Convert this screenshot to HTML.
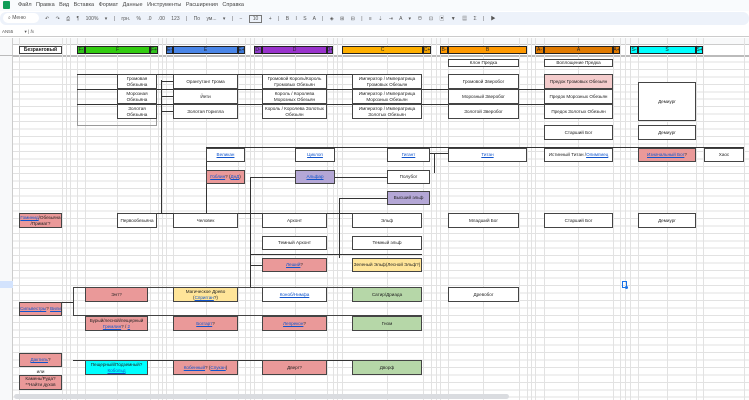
<!DOCTYPE html>
<html><head><meta charset="utf-8"><style>
*{margin:0;padding:0;box-sizing:border-box}
body{width:749px;height:400px;overflow:hidden;background:#fff;font-family:"Liberation Sans","Noto Sans CJK SC",sans-serif;position:relative;color:#222}
.a{position:absolute}
.b{position:absolute;border:1px solid #444;background:#fff;font-size:4.6px;display:flex;align-items:center;justify-content:center;text-align:center;line-height:1.2;overflow:hidden}
.p{background:#ea9999}.pl{background:#f4cccc}.v{background:#b4a7d6}.y{background:#ffe599}.g{background:#b6d7a8}.c{background:#00ffff}
u{color:#1155cc}
.h{position:absolute;background:#333;height:1px}
.vl{position:absolute;background:#333;width:1px}
.grid{position:absolute;left:0;top:55px;width:749px;height:345px;background-image:repeating-linear-gradient(to bottom,transparent 0,transparent 6.45px,#e2e2e2 6.45px,#e2e2e2 7.45px)}
.cl{position:absolute;top:38px;height:362px;width:1px;background:#e2e2e2}
.bar{position:absolute;top:46px;height:8px;font-size:5px;display:flex;align-items:center;justify-content:center;border:1px solid #222}
</style></head><body>
<div class="a" style="left:0;top:0;width:749px;height:11px;background:#f9fbfd"></div>
<div class="a" style="left:3px;top:1px;width:7px;height:8px;background:#0f9d58;border-radius:1px"></div>
<div class="a" style="left:18px;top:2px;font-size:5.5px;color:#444;word-spacing:3px">Файл Правка Вид Вставка Формат Данные Инструменты Расширения Справка</div>
<div class="a" style="left:0;top:12px;width:749px;height:13px;background:#edf2fa;border-radius:6px"></div>
<div class="a" style="left:3px;top:13px;width:36px;height:10px;background:#fff;border-radius:5px;font-size:5px;color:#555;padding:2px 0 0 5px">⌕ Меню</div>
<div class="a" style="left:45px;top:15px;font-size:5px;color:#555;word-spacing:5px">↶ ↷ ⎙ ¶ 100% ▾ | грн. % .0 .00 123 | По ум... ▾ | − <span style="border:1px solid #777;padding:0 3px">10</span> + | B I S A | ◈ ⊞ ⊟ | ≡ ⇣ ⇥ A ▾ ⊖ ⊡ ▣ ▼ ▦ Σ | ▶</div>
<div class="a" style="left:2px;top:29px;font-size:4.5px;color:#555">AN55 &nbsp;&nbsp;&nbsp;&nbsp;&nbsp;&nbsp;&nbsp;&nbsp;▾ | <i>fx</i></div>
<div class="a" style="left:0;top:36px;width:749px;height:1px;background:#ccc"></div>
<div class="a" style="left:0;top:38px;width:749px;height:7px;background:#f8f9fa;border-bottom:1px solid #ccc"></div>
<div class="a" style="left:0;top:38px;width:13px;height:362px;background:#f8f9fa;border-right:1px solid #ccc"></div>
<div class="a" style="left:0;top:55px;width:749px;height:2px;background:#bbb"></div>
<div class="grid"></div>
<div class="cl" style="left:19px"></div><div class="cl" style="left:62px"></div><div class="cl" style="left:66px"></div><div class="cl" style="left:70px"></div><div class="cl" style="left:77px"></div><div class="cl" style="left:85px"></div><div class="cl" style="left:117px"></div><div class="cl" style="left:150px"></div><div class="cl" style="left:158px"></div><div class="cl" style="left:162px"></div><div class="cl" style="left:166px"></div><div class="cl" style="left:173px"></div><div class="cl" style="left:206px"></div><div class="cl" style="left:238px"></div><div class="cl" style="left:245px"></div><div class="cl" style="left:250px"></div><div class="cl" style="left:254px"></div><div class="cl" style="left:262px"></div><div class="cl" style="left:295px"></div><div class="cl" style="left:327px"></div><div class="cl" style="left:333px"></div><div class="cl" style="left:337px"></div><div class="cl" style="left:342px"></div><div class="cl" style="left:387px"></div><div class="cl" style="left:423px"></div><div class="cl" style="left:431px"></div><div class="cl" style="left:436px"></div><div class="cl" style="left:440px"></div><div class="cl" style="left:448px"></div><div class="cl" style="left:483px"></div><div class="cl" style="left:519px"></div><div class="cl" style="left:527px"></div><div class="cl" style="left:531px"></div><div class="cl" style="left:535px"></div><div class="cl" style="left:544px"></div><div class="cl" style="left:578px"></div><div class="cl" style="left:613px"></div><div class="cl" style="left:620px"></div><div class="cl" style="left:625px"></div><div class="cl" style="left:630px"></div><div class="cl" style="left:638px"></div><div class="cl" style="left:667px"></div><div class="cl" style="left:696px"></div><div class="cl" style="left:703px"></div><div class="cl" style="left:744px"></div>
<div class="a" style="left:0;top:56px;width:13px;height:344px;background:#f8f9fa;border-right:1px solid #ccc"></div>
<div class="a" style="left:0;top:281px;width:13px;height:7px;background:#d3e3fd"></div>
<div class="a" style="left:14px;top:394px;width:495px;height:5px;background:#dadce0;border-radius:3px"></div>

<div class="b" style="left:19px;top:46px;width:43px;height:8px;font-weight:bold;font-size:5px;border-width:1px">Безранговый</div>
<div class="bar" style="left:77px;width:8px;background:#2fc21b">F-</div><div class="bar" style="left:85px;width:65px;background:#33cc11">F</div><div class="bar" style="left:150px;width:8px;background:#2fc21b">F+</div>
<div class="bar" style="left:166px;width:7px;background:#3c78d8">E-</div><div class="bar" style="left:173px;width:65px;background:#4a86e8">E</div><div class="bar" style="left:238px;width:7px;background:#3c78d8">E+</div>
<div class="bar" style="left:254px;width:8px;background:#8e3ccb">D-</div><div class="bar" style="left:262px;width:65px;background:#9933cc">D</div><div class="bar" style="left:327px;width:6px;background:#8e3ccb">D+</div>
<div class="bar" style="left:342px;width:81px;background:#ffb000">C</div><div class="bar" style="left:423px;width:8px;background:#f1a200">C+</div>
<div class="bar" style="left:440px;width:8px;background:#ff9900">B-</div><div class="bar" style="left:448px;width:79px;background:#ff9900">B</div>
<div class="bar" style="left:535px;width:9px;background:#e07a00">A-</div><div class="bar" style="left:544px;width:69px;background:#e07a00">A</div><div class="bar" style="left:613px;width:7px;background:#e07a00">A+</div>
<div class="bar" style="left:630px;width:8px;background:#00ffff">S-</div><div class="bar" style="left:638px;width:58px;background:#00ffff">S</div><div class="bar" style="left:696px;width:7px;background:#00ffff">S+</div>

<div class="a" style="left:77px;top:74px;width:80px;height:52px;border:1px solid #999"></div>
<div class="h" style="left:77px;top:74px;width:345px"></div><div class="h" style="left:77px;top:89px;width:345px"></div><div class="h" style="left:77px;top:104px;width:345px"></div>
<div class="h" style="left:422px;top:89px;width:191px"></div><div class="h" style="left:422px;top:104px;width:191px"></div>
<div class="vl" style="left:161px;top:80px;height:133px"></div>
<div class="h" style="left:161px;top:81px;width:12px"></div><div class="h" style="left:161px;top:96px;width:12px"></div><div class="h" style="left:161px;top:111px;width:12px"></div>

<div class="b" style="left:117px;top:74px;width:40px;height:15px">Громовая<br>Обезьяна</div>
<div class="b" style="left:117px;top:89px;width:40px;height:15px">Морозная<br>Обезьяна</div>
<div class="b" style="left:117px;top:104px;width:40px;height:15px">Золотая<br>Обезьяна</div>
<div class="b" style="left:173px;top:74px;width:65px;height:15px">Орангутанг Грома</div>
<div class="b" style="left:173px;top:89px;width:65px;height:15px">Йети</div>
<div class="b" style="left:173px;top:104px;width:65px;height:15px">Золотая Горилла</div>
<div class="b" style="left:262px;top:74px;width:65px;height:15px">Громовой Король/Король<br>Громовых Обезьян</div>
<div class="b" style="left:262px;top:89px;width:65px;height:15px">Король / Королева<br>Морозных Обезьян</div>
<div class="b" style="left:262px;top:104px;width:65px;height:15px">Король / Королева Золотых<br>Обезьян</div>
<div class="b" style="left:352px;top:74px;width:70px;height:15px">Император / Императрица<br>Громовых Обезьян</div>
<div class="b" style="left:352px;top:89px;width:70px;height:15px">Император / Императрица<br>Морозных Обезьян</div>
<div class="b" style="left:352px;top:104px;width:70px;height:15px">Император / Императрица<br>Золотых Обезьян</div>
<div class="b" style="left:448px;top:59px;width:71px;height:8px">Клон Предка</div>
<div class="b" style="left:544px;top:59px;width:69px;height:8px">Воплощение Предка</div>
<div class="b" style="left:448px;top:74px;width:71px;height:15px">Громовой Зверобог</div>
<div class="b" style="left:448px;top:89px;width:71px;height:15px">Морозный Зверобог</div>
<div class="b" style="left:448px;top:104px;width:71px;height:15px">Золотой Зверобог</div>
<div class="b pl" style="left:544px;top:74px;width:69px;height:15px">Предок Громовых Обезьян</div>
<div class="b" style="left:544px;top:89px;width:69px;height:15px">Предок Морозных Обезьян</div>
<div class="b" style="left:544px;top:104px;width:69px;height:15px">Предок Золотых Обезьян</div>
<div class="b" style="left:638px;top:82px;width:58px;height:39px">Демиург</div>
<div class="b" style="left:544px;top:125px;width:69px;height:15px">Старший Бог</div>
<div class="b" style="left:638px;top:125px;width:58px;height:15px">Демиург</div>

<div class="h" style="left:206px;top:147px;width:538px"></div>
<div class="vl" style="left:206px;top:147px;height:66px"></div>
<div class="vl" style="left:250px;top:177px;height:110px"></div>
<div class="h" style="left:250px;top:177px;width:137px"></div>
<div class="vl" style="left:339px;top:198px;height:60px"></div>
<div class="h" style="left:339px;top:198px;width:48px"></div>
<div class="h" style="left:430px;top:153px;width:18px"></div>
<div class="vl" style="left:434px;top:153px;height:20px"></div>
<div class="h" style="left:250px;top:254px;width:172px"></div>
<div class="h" style="left:250px;top:265px;width:12px"></div>
<div class="vl" style="left:250px;top:233px;height:54px"></div>
<div class="h" style="left:117px;top:213px;width:305px"></div>

<div class="b" style="left:206px;top:148px;width:39px;height:14px"><u>Великан</u></div>
<div class="b" style="left:295px;top:148px;width:40px;height:14px"><u>Циклоп</u></div>
<div class="b" style="left:387px;top:148px;width:43px;height:14px"><u>Гигант</u></div>
<div class="b" style="left:448px;top:148px;width:79px;height:14px"><u>Титан</u></div>
<div class="b" style="left:544px;top:148px;width:69px;height:14px">Истинный Титан / <u>Олимпиец</u></div>
<div class="b p" style="left:638px;top:148px;width:58px;height:14px"><u>Изначальный Бог</u>?</div>
<div class="b" style="left:704px;top:148px;width:40px;height:14px">Хаос</div>
<div class="b p" style="left:206px;top:170px;width:39px;height:14px"><u>Гоблин</u>? (<u>ДнД</u>)</div>
<div class="b v" style="left:295px;top:170px;width:40px;height:14px"><u>Альфар</u></div>
<div class="b" style="left:387px;top:170px;width:43px;height:14px">Полубог</div>
<div class="b v" style="left:387px;top:191px;width:43px;height:14px">Высший эльф</div>

<div class="b p" style="left:19px;top:213px;width:43px;height:15px"><span><u>Гоминид</u>/Обезьяна<br>/Примат?</span></div>
<div class="b" style="left:117px;top:213px;width:40px;height:15px">Первообезьяна</div>
<div class="b" style="left:173px;top:213px;width:65px;height:15px">Человек</div>
<div class="b" style="left:262px;top:213px;width:65px;height:15px">Архонт</div>
<div class="b" style="left:352px;top:213px;width:70px;height:15px">Эльф</div>
<div class="b" style="left:448px;top:213px;width:71px;height:15px">Младший Бог</div>
<div class="b" style="left:544px;top:213px;width:69px;height:15px">Старший Бог</div>
<div class="b" style="left:638px;top:213px;width:58px;height:15px">Демиург</div>
<div class="b" style="left:262px;top:236px;width:65px;height:14px">Темный Архонт</div>
<div class="b" style="left:352px;top:236px;width:70px;height:14px">Темный эльф</div>
<div class="b p" style="left:262px;top:258px;width:65px;height:14px"><u>Леший</u>?</div>
<div class="b y" style="left:352px;top:258px;width:70px;height:14px">Зеленый Эльф(Лесной Эльф?)</div>

<div class="a" style="left:73px;top:287px;width:349px;height:29px;border:1px solid #444;border-right:none"></div>
<div class="h" style="left:62px;top:302px;width:11px"></div>
<div class="a" style="left:73px;top:360px;width:349px;height:1px;background:#333"></div>
<div class="b p" style="left:85px;top:287px;width:63px;height:15px">Энт?</div>
<div class="b y" style="left:173px;top:287px;width:65px;height:15px"><span>Магическое Древо<br>(<u>Спригган</u>?)</span></div>
<div class="b" style="left:262px;top:287px;width:65px;height:15px"><u>Коноб/Нимфа</u></div>
<div class="b g" style="left:352px;top:287px;width:70px;height:15px">Сатир/Дриада</div>
<div class="b" style="left:448px;top:287px;width:71px;height:15px">Древобог</div>
<div class="b p" style="left:19px;top:302px;width:43px;height:14px"><span><u>Сильвестры</u>? <u>Вили</u></span></div>
<div class="b p" style="left:85px;top:316px;width:63px;height:15px"><span>Бурый/лесной/пещерный<br><u>Гремлин</u>? / <u>2</u></span></div>
<div class="b p" style="left:173px;top:316px;width:65px;height:15px"><u>Боггарт</u>?</div>
<div class="b p" style="left:262px;top:316px;width:65px;height:15px"><u>Лепрекон</u>?</div>
<div class="b g" style="left:352px;top:316px;width:70px;height:15px">Гном</div>
<div class="b p" style="left:19px;top:353px;width:43px;height:14px"><u>Дактиль</u>?</div>
<div class="a" style="left:19px;top:369px;width:43px;text-align:center;font-size:4.6px">или</div>
<div class="b p" style="left:19px;top:375px;width:43px;height:15px;align-items:flex-start"><span>Камень/Руда?<br>**Найти духов</span></div>
<div class="b c" style="left:85px;top:360px;width:63px;height:15px"><span>Пещерный/Подземный?<br><u>Кобольд</u></span></div>
<div class="b p" style="left:173px;top:360px;width:65px;height:15px"><span><u>Кобенный</u>? (<u>Спукан</u>)</span></div>
<div class="b p" style="left:262px;top:360px;width:65px;height:15px">Дверг?</div>
<div class="b g" style="left:352px;top:360px;width:70px;height:15px">Дворф</div>
<div class="a" style="left:622px;top:281px;width:5px;height:7px;border:1px solid #1a73e8"></div>
<div class="a" style="left:625px;top:286px;width:3px;height:3px;background:#1a73e8;border-radius:50%"></div>
</body></html>
